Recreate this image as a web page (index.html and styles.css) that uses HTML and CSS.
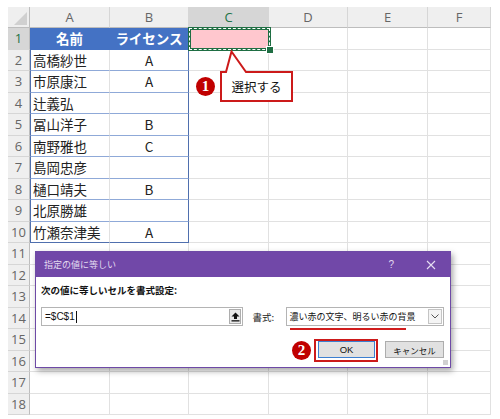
FILE: index.html
```html
<!DOCTYPE html>
<html lang="ja">
<head>
<meta charset="utf-8">
<title>指定の値に等しい</title>
<link rel="stylesheet" href="styles.css">
</head>
<body>
<div class="page">
  <div class="sheet">
    <div class="grid">
      <div class="c corner"><span class="tri"></span></div>
      <div class="c ch">A</div><div class="c ch">B</div><div class="c ch hsel">C</div><div class="c ch">D</div><div class="c ch">E</div><div class="c ch">F</div>

      <div class="c rh hsel">1</div><div class="c th">名前</div><div class="c th">ライセンス</div><div class="c pink"></div><div class="c"></div><div class="c"></div><div class="c"></div>
      <div class="c rh">2</div><div class="c tb ta">高橋紗世</div><div class="c tb tbb ctr">A</div><div class="c"></div><div class="c"></div><div class="c"></div><div class="c"></div>
      <div class="c rh">3</div><div class="c tb ta">市原康江</div><div class="c tb tbb ctr">A</div><div class="c"></div><div class="c"></div><div class="c"></div><div class="c"></div>
      <div class="c rh">4</div><div class="c tb ta">辻義弘</div><div class="c tb tbb ctr"></div><div class="c"></div><div class="c"></div><div class="c"></div><div class="c"></div>
      <div class="c rh">5</div><div class="c tb ta">冨山洋子</div><div class="c tb tbb ctr">B</div><div class="c"></div><div class="c"></div><div class="c"></div><div class="c"></div>
      <div class="c rh">6</div><div class="c tb ta">南野雅也</div><div class="c tb tbb ctr">C</div><div class="c"></div><div class="c"></div><div class="c"></div><div class="c"></div>
      <div class="c rh">7</div><div class="c tb ta">島岡忠彦</div><div class="c tb tbb ctr"></div><div class="c"></div><div class="c"></div><div class="c"></div><div class="c"></div>
      <div class="c rh">8</div><div class="c tb ta">樋口靖夫</div><div class="c tb tbb ctr">B</div><div class="c"></div><div class="c"></div><div class="c"></div><div class="c"></div>
      <div class="c rh">9</div><div class="c tb ta">北原勝雄</div><div class="c tb tbb ctr"></div><div class="c"></div><div class="c"></div><div class="c"></div><div class="c"></div>
      <div class="c rh">10</div><div class="c tb ta last">竹瀬奈津美</div><div class="c tb tbb last ctr">A</div><div class="c"></div><div class="c"></div><div class="c"></div><div class="c"></div>
      <div class="c rh">11</div><div class="c"></div><div class="c"></div><div class="c"></div><div class="c"></div><div class="c"></div><div class="c"></div>
      <div class="c rh">12</div><div class="c"></div><div class="c"></div><div class="c"></div><div class="c"></div><div class="c"></div><div class="c"></div>
      <div class="c rh">13</div><div class="c"></div><div class="c"></div><div class="c"></div><div class="c"></div><div class="c"></div><div class="c"></div>
      <div class="c rh">14</div><div class="c"></div><div class="c"></div><div class="c"></div><div class="c"></div><div class="c"></div><div class="c"></div>
      <div class="c rh">15</div><div class="c"></div><div class="c"></div><div class="c"></div><div class="c"></div><div class="c"></div><div class="c"></div>
      <div class="c rh">16</div><div class="c"></div><div class="c"></div><div class="c"></div><div class="c"></div><div class="c"></div><div class="c"></div>
      <div class="c rh">17</div><div class="c"></div><div class="c"></div><div class="c"></div><div class="c"></div><div class="c"></div><div class="c"></div>
      <div class="c rh">18</div><div class="c"></div><div class="c"></div><div class="c"></div><div class="c"></div><div class="c"></div><div class="c"></div>
    </div>
  </div>

  <div class="sel"></div>

  <svg class="callout" width="80" height="56" viewBox="219 49 80 56">
    <path d="M221 72 H226 L231.5 51.5 L246 72 H292 V101 H221 Z" fill="#fff" stroke="#cc1a1a" stroke-width="2" stroke-linejoin="miter"/>
  </svg>
  <div class="callout-text">選択する</div>
  <div class="badge b1">1</div>

  <div class="dialog">
    <div class="dlg-title">
      <span class="dlg-name">指定の値に等しい</span>
      <span class="dlg-help">?</span>
      <svg class="dlg-close" width="10" height="10" viewBox="0 0 10 10"><path d="M1 1 L9 9 M9 1 L1 9" stroke="#e6def2" stroke-width="1.1"/></svg>
    </div>
    <div class="dlg-body">
      <div class="dlg-label">次の値に等しいセルを書式設定:</div>
      <div class="dlg-row">
        <div class="ref-input">
          <span class="ref-text">=$C$1</span><span class="caret"></span>
          <span class="ref-btn"><svg width="9" height="10" viewBox="0 0 9 10"><path d="M4.5 0.5 L8.5 4.5 H6 V7 H3 V4.5 H0.5 Z" fill="#111"/><rect x="0.5" y="8.2" width="8" height="1.3" fill="#111"/></svg></span>
        </div>
        <span class="fmt-label">書式:</span>
        <div class="fmt-select">
          <span class="fmt-text">濃い赤の文字、明るい赤の背景</span>
          <span class="fmt-drop"><svg width="8" height="5" viewBox="0 0 8 5"><path d="M0.5 0.5 L4 4 L7.5 0.5" fill="none" stroke="#555" stroke-width="1"/></svg></span>
        </div>
      </div>
      <div class="dlg-buttons">
        <div class="btn ok">OK</div>
        <div class="btn">キャンセル</div>
      </div>
      <span class="grip"></span>
    </div>
  </div>

  <div class="uline"></div>
  <div class="okmark"></div>
  <div class="badge b2">2</div>
</div>
</body>
</html>
```

FILE: styles.css
```css
* { box-sizing: border-box; }
body {
  margin: 0;
  background: #fff;
  font-family: "Noto Sans CJK JP", "Noto Sans", sans-serif;
}
.page {
  position: relative;
  width: 500px;
  height: 419px;
  overflow: hidden;
}
.sheet {
  padding: 7px 0 0 8px;
}
.grid {
  display: grid;
  grid-template-columns: 22px 80px 79px 80px 79px 80px 63px;
  grid-template-rows: 21px repeat(18, 21.5px);
}
.c {
  border-right: 1px solid #e1e1e1;
  border-bottom: 1px solid #e1e1e1;
  display: flex;
  align-items: center;
  padding-left: 3px;
  font-size: 13.5px;
  color: #222;
  white-space: nowrap;
  overflow: hidden;
}
.ctr { justify-content: center; padding-left: 0; }
.corner {
  background: #efefef;
  border-right-color: #bdbdbd;
  border-bottom-color: #bdbdbd;
  position: relative;
}
.tri {
  position: absolute;
  right: 2px;
  bottom: 2px;
  width: 0;
  height: 0;
  border-left: 13px solid transparent;
  border-bottom: 13px solid #d0d0d0;
}
.ch, .rh {
  background: #efefef;
  color: #666;
  font-family: "Open Sans", "Liberation Sans", sans-serif;
  font-size: 13px;
  justify-content: center;
  padding-left: 0;
}
.ch {
  border-right-color: #d6d6d6;
  border-bottom-color: #bdbdbd;
}
.rh {
  border-right-color: #bdbdbd;
  border-bottom-color: #d6d6d6;
}
.hsel {
  background: #d6d6d6;
  color: #217346;
}
.th {
  background: #4472c4;
  color: #fff;
  font-weight: bold;
  justify-content: center;
  padding-left: 0;
  border-right-color: #4472c4;
  border-bottom-color: #4472c4;
}
.tb {
  border-bottom-color: #8fa9d8;
}
.ta { border-left: 1px solid #4f6fae; padding-left: 2px; }
.tbb { border-right-color: #4f6fae; }
.tb.last { border-bottom-color: #4f6fae; }
.pink { background: #ffc7ce; }

.sel {
  position: absolute;
  left: 188px;
  top: 27px;
  width: 83px;
  height: 24px;
  border: 3px solid #1f6e43;
}
.sel::after {
  content: "";
  position: absolute;
  left: -2px;
  top: -2px;
  right: -2px;
  bottom: -2px;
  border: 1px dashed #fff;
}
.sel::before {
  content: "";
  position: absolute;
  right: -6px;
  bottom: -6px;
  width: 6px;
  height: 6px;
  background: #1f6e43;
  border: 1px solid #fff;
  z-index: 1;
}
.callout {
  position: absolute;
  left: 219px;
  top: 49px;
}
.callout-text {
  position: absolute;
  left: 222px;
  top: 73px;
  width: 69px;
  height: 27px;
  display: flex;
  align-items: center;
  justify-content: center;
  font-size: 12.5px;
  color: #111;
}
.badge {
  position: absolute;
  width: 19px;
  height: 19px;
  border-radius: 50%;
  background: #c00000;
  color: #fff;
  font-family: "Liberation Serif", "DejaVu Serif", serif;
  font-weight: bold;
  font-size: 15px;
  display: flex;
  align-items: center;
  justify-content: center;
  line-height: 1;
}
.b1 { left: 196px; top: 77px; }
.b2 { left: 292px; top: 341px; }

.dialog {
  position: absolute;
  left: 35px;
  top: 251px;
  width: 416px;
  height: 117px;
  border: 1px solid #6e4aa6;
  background: #fff;
  box-shadow: 2px 3px 6px rgba(0, 0, 0, 0.35);
}
.dlg-title {
  height: 25px;
  background: #7148a8;
  display: flex;
  align-items: center;
  padding-left: 8px;
  color: #e3dbf0;
  font-size: 9px;
}
.dlg-name { flex: 1; }
.dlg-help {
  font-family: "Liberation Sans", sans-serif;
  font-size: 10px;
  margin-right: 32px;
}
.dlg-close { margin-right: 14px; }
.dlg-body {
  position: relative;
  height: 90px;
  padding: 6px 6px 0 5px;
}
.dlg-label {
  font-size: 9.5px;
  font-weight: bold;
  color: #111;
  height: 14px;
  line-height: 14px;
}
.dlg-row {
  display: flex;
  align-items: center;
  margin-top: 10px;
  height: 19px;
}
.ref-input {
  width: 203px;
  height: 19px;
  border: 1px solid #b4b4b4;
  display: flex;
  align-items: center;
  padding-left: 3px;
}
.ref-text {
  font-family: "Liberation Sans", sans-serif;
  font-size: 10px;
  color: #111;
}
.caret {
  width: 1px;
  height: 12px;
  background: #111;
  margin-left: 1px;
}
.ref-btn {
  margin-left: auto;
  margin-right: 1px;
  width: 12px;
  height: 15px;
  border: 1px solid #adadad;
  background: #e9e9e9;
  display: flex;
  align-items: center;
  justify-content: center;
}
.fmt-label {
  margin-left: 9px;
  width: 34px;
  font-size: 9.5px;
  color: #222;
}
.fmt-select {
  width: 158px;
  height: 19px;
  border: 1px solid #b4b4b4;
  display: flex;
  align-items: center;
  padding-left: 2px;
}
.fmt-text {
  font-size: 9px;
  color: #111;
}
.fmt-drop {
  margin-left: auto;
  margin-right: 1px;
  width: 14px;
  height: 15px;
  border: 1px solid #c4c4c4;
  background: #f4f4f4;
  display: flex;
  align-items: center;
  justify-content: center;
}
.dlg-buttons {
  display: flex;
  justify-content: flex-end;
  gap: 10px;
  margin-top: 15px;
  padding-right: 0;
}
.btn {
  height: 17px;
  width: 59px;
  border: 1px solid #adadad;
  background: #e1e1e1;
  font-size: 8.5px;
  color: #111;
  display: flex;
  align-items: center;
  justify-content: center;
}
.btn.ok {
  width: 57px;
  border-color: #3c7fd0;
  font-family: "Liberation Sans", sans-serif;
  font-size: 9.5px;
}
.grip {
  position: absolute;
  right: 2px;
  bottom: 2px;
  width: 5px;
  height: 5px;
  background-image: radial-gradient(circle, #9a9a9a 0.6px, transparent 0.8px);
  background-size: 2px 2px;
}
.uline {
  position: absolute;
  left: 290px;
  top: 328px;
  width: 116px;
  height: 2px;
  background: #d01c1c;
}
.okmark {
  position: absolute;
  left: 314px;
  top: 339px;
  width: 64px;
  height: 23px;
  border: 2px solid #cc1a1a;
}
```
